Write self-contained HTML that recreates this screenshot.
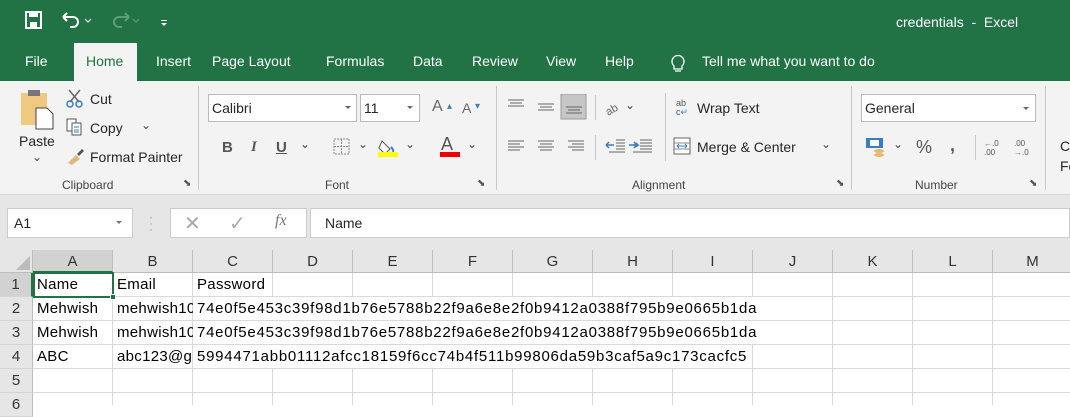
<!DOCTYPE html>
<html><head><meta charset="utf-8"><style>
*{margin:0;padding:0;box-sizing:border-box}
body{width:1070px;height:405px;overflow:hidden;position:relative;font-family:"Liberation Sans",sans-serif;background:#fff;color:#262626}
.a{position:absolute;white-space:nowrap}
.g{background:#217346}
.w{color:#fff;font-size:14px}
.t{font-size:14px;color:#262626}
.sm{font-size:12px;color:#444}
.vl{position:absolute;width:1px;background:#c8c8c8}
.col{position:absolute;top:250px;height:23px;border-right:1px solid #bdbdbd;border-bottom:1px solid #bdbdbd;background:#e6e6e6;text-align:center;font-size:15px;line-height:23px;color:#333}
.rh{position:absolute;left:0;width:33px;height:24px;border-right:1px solid #bdbdbd;border-bottom:1px solid #d4d4d4;background:#e6e6e6;text-align:center;font-size:15px;line-height:24px;color:#333}
.c{position:absolute;font-size:15px;line-height:24px;color:#000;letter-spacing:0.3px}
.h{letter-spacing:0.75px}
</style></head><body>
<div class="a g" style="left:0;top:0;width:1070px;height:81px"></div>
<svg class="a" style="left:25px;top:11px" width="150" height="20">
<rect x="1" y="1" width="15" height="16" fill="none" stroke="#fff" stroke-width="2"/><rect x="4" y="1" width="9" height="5" fill="#fff"/><rect x="5" y="11" width="7" height="6" fill="#fff"/>
<path d="M38 6 h10 a5 5 0 0 1 0 10 h-3 M38 6 l4 -4 M38 6 l4 4" fill="none" stroke="#fff" stroke-width="2"/>
<path d="M60 8 l3 3 l3 -3" fill="none" stroke="#fff" stroke-width="1.2"/>
<path d="M104 6 h-10 a5 5 0 0 0 0 10 h3 M104 6 l-4 -4 M104 6 l-4 4" fill="none" stroke="#5f9c7a" stroke-width="2"/>
<path d="M108 8 l3 3 l3 -3" fill="none" stroke="#5f9c7a" stroke-width="1.2"/>
<rect x="136" y="9" width="6" height="1" fill="#fff"/><path d="M136 12 h6 l-3 3z" fill="#fff"/>
</svg>
<div class="a w" style="left:896px;top:14px">credentials&nbsp; -&nbsp; Excel</div>
<div class="a" style="left:74px;top:43px;width:63px;height:38px;background:#f3f3f3"></div>
<div class="a w" style="left:25px;top:53px">File</div>
<div class="a" style="left:86px;top:53px;font-size:14px;color:#217346">Home</div>
<div class="a w" style="left:156px;top:53px">Insert</div>
<div class="a w" style="left:212px;top:53px">Page Layout</div>
<div class="a w" style="left:326px;top:53px">Formulas</div>
<div class="a w" style="left:413px;top:53px">Data</div>
<div class="a w" style="left:472px;top:53px">Review</div>
<div class="a w" style="left:546px;top:53px">View</div>
<div class="a w" style="left:605px;top:53px">Help</div>
<svg class="a" style="left:669px;top:52px" width="18" height="22"><path d="M5 14 a6 6 0 1 1 8 0 v3 h-8z M6 19 h6" fill="none" stroke="#fff" stroke-width="1.3"/></svg>
<div class="a w" style="left:702px;top:53px">Tell me what you want to do</div>
<div class="a" style="left:0;top:81px;width:1070px;height:114px;background:#f3f3f3;border-bottom:1px solid #d6d6d6"></div>
<div class="a" style="left:0;top:195px;width:1070px;height:55px;background:#e6e6e6"></div>
<div class="vl" style="left:198px;top:86px;height:104px"></div>
<div class="vl" style="left:496px;top:86px;height:104px"></div>
<div class="vl" style="left:851px;top:86px;height:104px"></div>
<div class="vl" style="left:1045px;top:86px;height:104px"></div>
<svg class="a" style="left:20px;top:88px" width="36" height="42"><rect x="1" y="5" width="26" height="32" fill="#eec97f"/><rect x="8" y="2" width="12" height="6" fill="#777"/><path d="M16 20 h11 l6 6 v15 h-17z" fill="#fff" stroke="#444"/></svg>
<div class="a t" style="left:19px;top:133px">Paste</div>
<div class="a sm" style="left:32px;top:150px">⌄</div>
<svg class="a" style="left:65px;top:88px" width="20" height="20"><path d="M4 2 l10 12 M15 2 l-10 12" stroke="#666" stroke-width="1.5"/><circle cx="5" cy="16" r="3" fill="none" stroke="#3b7dc4" stroke-width="1.5"/><circle cx="14" cy="16" r="3" fill="none" stroke="#3b7dc4" stroke-width="1.5"/></svg>
<div class="a t" style="left:90px;top:91px">Cut</div>
<svg class="a" style="left:65px;top:117px" width="20" height="20"><rect x="2" y="2" width="9" height="12" fill="#fff" stroke="#555"/><rect x="7" y="6" width="9" height="12" fill="#fff" stroke="#555"/><path d="M9 10h5M9 13h5M9 15h5" stroke="#3b7dc4"/></svg>
<div class="a t" style="left:90px;top:120px">Copy</div>
<div class="a sm" style="left:141px;top:118px">⌄</div>
<svg class="a" style="left:65px;top:146px" width="20" height="20"><path d="M3 17 l8 -8 l4 4 l-8 6z" fill="#e0b97a"/><path d="M12 8 l5 -5 l2 2 l-5 5z" fill="#555"/></svg>
<div class="a t" style="left:90px;top:149px">Format Painter</div>
<div class="a sm" style="left:62px;top:178px">Clipboard</div>
<div class="a" style="left:183px;top:178px;font-size:10px;color:#555">⬊</div>
<div class="a" style="left:208px;top:94px;width:149px;height:28px;background:#fff;border:1px solid #bbb;font-size:14px;line-height:26px;padding-left:3px">Calibri</div>
<div class="a" style="left:345px;top:106px;border:3px solid transparent;border-top-color:#666"></div>
<div class="a" style="left:360px;top:94px;width:60px;height:28px;background:#fff;border:1px solid #bbb;font-size:14px;line-height:26px;padding-left:3px">11</div>
<div class="a" style="left:407px;top:106px;border:3px solid transparent;border-top-color:#666"></div>
<div class="a" style="left:432px;top:98px;font-size:16px;color:#666">A</div>
<div class="a" style="left:447px;top:101px;font-size:10px;color:#3b7dc4">▴</div>
<div class="a" style="left:462px;top:100px;font-size:14px;color:#666">A</div>
<div class="a" style="left:475px;top:101px;font-size:10px;color:#3b7dc4">▾</div>
<div class="a" style="left:222px;top:139px;font-size:15px;font-weight:bold;color:#555">B</div>
<div class="a" style="left:251px;top:139px;font-size:15px;font-style:italic;font-family:'Liberation Serif';font-weight:bold;color:#555">I</div>
<div class="a" style="left:276px;top:139px;font-size:15px;font-weight:bold;text-decoration:underline;color:#555">U</div>
<div class="a sm" style="left:300px;top:137px">⌄</div>
<svg class="a" style="left:333px;top:138px" width="18" height="18"><rect x="1" y="1" width="15" height="15" fill="none" stroke="#888" stroke-dasharray="2 1"/><path d="M8.5 1v15M1 8.5h15" stroke="#888" stroke-dasharray="2 1"/></svg>
<div class="a sm" style="left:358px;top:137px">⌄</div>
<svg class="a" style="left:377px;top:137px" width="20" height="20"><path d="M5 4 l8 8 l-5 5 l-6 -6z" fill="#fff" stroke="#555"/><path d="M14 10 q3 3 2 5" stroke="#3b7dc4" fill="none" stroke-width="2"/></svg>
<div class="a" style="left:378px;top:152px;width:20px;height:5px;background:#ff0"></div>
<div class="a sm" style="left:405px;top:137px">⌄</div>
<div class="a" style="left:441px;top:134px;font-size:18px;color:#555">A</div>
<div class="a" style="left:440px;top:152px;width:20px;height:5px;background:#e00"></div>
<div class="a sm" style="left:467px;top:137px">⌄</div>
<div class="a sm" style="left:325px;top:178px">Font</div>
<div class="a" style="left:477px;top:178px;font-size:10px;color:#555">⬊</div>
<svg class="a" style="left:505px;top:94px" width="140" height="65">
<g stroke="#666"><path d="M3 6h16M5 9h12M3 12h16"/><path d="M33 10h16M35 13h12M33 16h16"/></g>
<rect x="56" y="0" width="25" height="25" fill="#c6c6c6" stroke="#999"/>
<g stroke="#666"><path d="M61 13h16M63 16h12M61 19h16"/></g>
<g stroke="#666"><path d="M3 47h16M3 50h12M3 53h16M3 56h12"/><path d="M33 47h16M35 50h12M33 53h16M35 56h12"/><path d="M63 47h16M67 50h12M63 53h16M67 56h12"/></g>
<text x="100" y="20" font-size="11" fill="#666" transform="rotate(-30 105 15)">ab</text>
<g stroke="#3b7dc4" stroke-width="1.5"><path d="M101 51h8M101 51l3-3M101 51l3 3"/><path d="M132 51h-8M132 51l-3-3M132 51l-3 3"/></g>
<g stroke="#666"><path d="M111 46h9M111 49h9M111 52h9M111 55h9M104 58h16"/></g>
</svg>
<svg class="a" style="left:632px;top:139px" width="22" height="16"><g stroke="#666"><path d="M8 1h12M8 4h12M8 7h12M8 10h12M1 13h19"/></g><path d="M1 6h5l-2-2M6 6l-2 2" stroke="#3b7dc4" stroke-width="1.5" fill="none"/></svg>
<div class="a sm" style="left:625px;top:98px">⌄</div>
<div class="vl" style="left:595px;top:95px;height:25px"></div>
<div class="vl" style="left:595px;top:135px;height:25px"></div>
<div class="vl" style="left:665px;top:93px;height:68px"></div>
<div class="a" style="left:676px;top:99px;font-size:9px;line-height:9px;color:#555">ab<br>c<span style="color:#3b7dc4">↵</span></div>
<div class="a t" style="left:697px;top:100px">Wrap Text</div>
<svg class="a" style="left:673px;top:137px" width="18" height="18"><rect x="1" y="1" width="16" height="16" fill="#fff" stroke="#666"/><path d="M1 6h16M1 12h16" stroke="#888"/><path d="M4 9h10M4 9l2-2M4 9l2 2M14 9l-2-2M14 9l-2 2" stroke="#3b7dc4" fill="none"/></svg>
<div class="a t" style="left:697px;top:139px">Merge &amp; Center</div>
<div class="a sm" style="left:821px;top:137px">⌄</div>
<div class="a sm" style="left:632px;top:178px">Alignment</div>
<div class="a" style="left:836px;top:178px;font-size:10px;color:#555">⬊</div>
<div class="a" style="left:861px;top:94px;width:175px;height:28px;background:#fff;border:1px solid #bbb;font-size:14px;line-height:26px;padding-left:3px">General</div>
<div class="a" style="left:1023px;top:107px;border:3px solid transparent;border-top-color:#666"></div>
<svg class="a" style="left:865px;top:137px" width="24" height="22"><rect x="1" y="1" width="17" height="10" fill="#3b7dc4"/><rect x="5" y="3" width="9" height="6" fill="#fff"/><ellipse cx="14" cy="14" rx="5" ry="2" fill="#e8b86a"/><ellipse cx="14" cy="18" rx="5" ry="2" fill="#e8b86a"/></svg>
<div class="a sm" style="left:893px;top:137px">⌄</div>
<div class="a" style="left:916px;top:137px;font-size:18px;color:#555">%</div>
<div class="a" style="left:950px;top:135px;font-size:18px;font-weight:bold;color:#555">,</div>
<div class="vl" style="left:975px;top:135px;height:25px"></div>
<div class="a" style="left:984px;top:139px;font-size:8px;line-height:9px;color:#555"><span style="color:#3b7dc4">←</span>.0<br>.00</div>
<div class="a" style="left:1014px;top:139px;font-size:8px;line-height:9px;color:#555">.00<br><span style="color:#3b7dc4">→</span>.0</div>
<div class="a sm" style="left:915px;top:178px">Number</div>
<div class="a" style="left:1029px;top:178px;font-size:10px;color:#555">⬊</div>
<div class="a t" style="left:1060px;top:136px;line-height:20px">C<br>Fo</div>
<div class="a" style="left:7px;top:208px;width:126px;height:30px;background:#fff;border:1px solid #ccc;font-size:14px;line-height:28px;padding-left:6px">A1</div>
<div class="a" style="left:116px;top:221px;border:3px solid transparent;border-top-color:#777"></div>
<div class="a" style="left:149px;top:214px;font-size:12px;color:#999;line-height:6px">·<br>·<br>·</div>
<div class="a" style="left:170px;top:208px;width:137px;height:30px;background:#fff;border:1px solid #ccc"></div>
<div class="a" style="left:184px;top:211px;font-size:20px;color:#aaa">✕</div>
<div class="a" style="left:229px;top:211px;font-size:20px;color:#aaa">✓</div>
<div class="a" style="left:275px;top:212px;font-size:16px;font-style:italic;font-family:'Liberation Serif';color:#777">fx</div>
<div class="a" style="left:310px;top:208px;width:760px;height:30px;background:#fff;border:1px solid #ccc;font-size:14px;line-height:28px;padding-left:14px">Name</div>
<div class="a" style="left:0;top:250px;width:33px;height:23px;background:#e6e6e6;border-right:1px solid #bdbdbd;border-bottom:1px solid #bdbdbd"></div>
<svg class="a" style="left:14px;top:255px" width="17" height="16"><path d="M16 1v14h-14z" fill="#bcbcbc"/></svg>
<div class="col" style="left:33px;width:80px;background:#d2d2d2;border-bottom:2px solid #217346">A</div>
<div class="col" style="left:113px;width:80px">B</div>
<div class="col" style="left:193px;width:80px">C</div>
<div class="col" style="left:273px;width:80px">D</div>
<div class="col" style="left:353px;width:80px">E</div>
<div class="col" style="left:433px;width:80px">F</div>
<div class="col" style="left:513px;width:80px">G</div>
<div class="col" style="left:593px;width:80px">H</div>
<div class="col" style="left:673px;width:80px">I</div>
<div class="col" style="left:753px;width:80px">J</div>
<div class="col" style="left:833px;width:80px">K</div>
<div class="col" style="left:913px;width:80px">L</div>
<div class="col" style="left:993px;width:80px">M</div>
<div class="a" style="left:33px;top:273px;width:1037px;height:132px;background:repeating-linear-gradient(to right,transparent 0 79px,#d9d9d9 79px 80px),repeating-linear-gradient(to bottom,transparent 0 23px,#d9d9d9 23px 24px)"></div>
<div class="rh" style="top:273px;background:#d2d2d2;border-right:2px solid #217346">1</div>
<div class="rh" style="top:297px">2</div>
<div class="rh" style="top:321px">3</div>
<div class="rh" style="top:345px">4</div>
<div class="rh" style="top:369px">5</div>
<div class="rh" style="top:393px">6</div>
<div class="a" style="left:194px;top:297px;width:565px;height:23px;background:#fff"></div>
<div class="a" style="left:194px;top:321px;width:565px;height:23px;background:#fff"></div>
<div class="a" style="left:194px;top:345px;width:558px;height:23px;background:#fff"></div>
<div class="c" style="left:37px;top:273px">Name</div>
<div class="c" style="left:117px;top:273px">Email</div>
<div class="c" style="left:197px;top:273px">Password</div>
<div class="c" style="left:37px;top:297px">Mehwish</div>
<div class="c" style="left:37px;top:321px">Mehwish</div>
<div class="c" style="left:37px;top:345px">ABC</div>
<div class="c" style="left:117px;top:297px;width:76px;overflow:hidden">mehwish10</div>
<div class="c" style="left:117px;top:321px;width:76px;overflow:hidden">mehwish10</div>
<div class="c" style="left:117px;top:345px;width:76px;overflow:hidden">abc123@g</div>
<div class="c h" style="left:197px;top:297px">74e0f5e453c39f98d1b76e5788b22f9a6e8e2f0b9412a0388f795b9e0665b1da</div>
<div class="c h" style="left:197px;top:321px">74e0f5e453c39f98d1b76e5788b22f9a6e8e2f0b9412a0388f795b9e0665b1da</div>
<div class="c h" style="left:197px;top:345px">5994471abb01112afcc18159f6cc74b4f511b99806da59b3caf5a9c173cacfc5</div>
<div class="a" style="left:33px;top:272px;width:81px;height:26px;border:2px solid #217346"></div>
<div class="a" style="left:110px;top:294px;width:6px;height:6px;background:#217346;border:1px solid #fff"></div>
</body></html>
